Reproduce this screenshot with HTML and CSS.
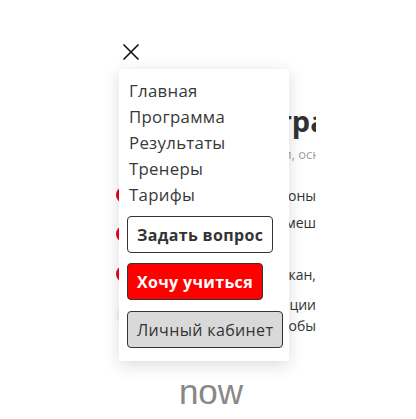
FILE: index.html
```html
<!DOCTYPE html>
<html lang="ru">
<head>
<meta charset="utf-8">
<title>Меню</title>
<link rel="stylesheet" href="styles.css">
</head>
<body>
<div class="page">
  <section class="content">
    <h2 class="title">Программа</h2>
    <p class="subtitle">питании, основы</p>
    <ul class="points">
      <li class="point"><span class="dot"></span><span class="lines"><span class="line">Пройдёшь все зоны</span></span></li>
      <li class="point"><span class="dot"></span><span class="lines"><span class="line">Научишься и смеш</span><span class="line short">и</span></span></li>
      <li class="point"><span class="dot"></span><span class="lines"><span class="line">Попадёшь на канал кан,</span></span></li>
      <li class="point"><span class="dot faint"></span><span class="lines"><span class="line">Получишь мотивации</span><span class="line">для того чтобы</span></span></li>
    </ul>
  </section>
  <div class="now">now</div>

  <button class="close" aria-label="Закрыть">
    <svg width="18" height="18" viewBox="0 0 18 18"><path d="M1.5 1.5 L16.5 16.5 M16.5 1.5 L1.5 16.5" stroke="#111" stroke-width="1.6" fill="none"/></svg>
  </button>

  <nav class="menu">
    <a class="menu-link" href="#">Главная</a>
    <a class="menu-link" href="#">Программа</a>
    <a class="menu-link" href="#">Результаты</a>
    <a class="menu-link" href="#">Тренеры</a>
    <a class="menu-link" href="#">Тарифы</a>
    <div class="menu-buttons">
      <button class="btn btn-outline">Задать вопрос</button>
      <button class="btn btn-red">Хочу учиться</button>
      <button class="btn btn-gray">Личный кабинет</button>
    </div>
  </nav>
</div>
</body>
</html>
```

FILE: styles.css
```css
* { box-sizing: border-box; }
html, body { margin: 0; padding: 0; background: #fff; }
body { font-family: "Open Sans", "Noto Sans", sans-serif; color: #333; }

.page {
  position: relative;
  width: 416px;
  height: 419px;
  overflow: hidden;
}

.content {
  margin-left: 110px;
  width: 206px;
  padding-top: 103px;
  overflow: hidden;
}
.title {
  margin: 0;
  padding-left: 110px;
  font-size: 29px;
  font-weight: 700;
  line-height: 36px;
  white-space: nowrap;
  color: #333;
}
.subtitle {
  margin: 6px 0 0;
  padding-left: 127px;
  font-size: 13px;
  line-height: 18px;
  color: #a0a0a0;
  white-space: nowrap;
}
.points {
  list-style: none;
  margin: 17px 0 0;
  padding: 0;
  display: flex;
  flex-direction: column;
}
.point {
  display: flex;
  align-items: center;
  gap: 8px;
}
.point:nth-child(1) { height: 30px; }
.point:nth-child(2) { height: 48px; }
.point:nth-child(3) { height: 32px; }
.point:nth-child(4) { height: 50px; }
.dot {
  flex: none;
  width: 16px;
  height: 16px;
  border-radius: 50%;
  background: #e8001c;
  margin-left: 6px;
}
.dot.faint { background: #fdf1f3; }
.lines {
  flex: 1;
  display: flex;
  flex-direction: column;
  font-size: 14px;
  line-height: 21px;
  min-width: 0;
}
.line { white-space: nowrap; text-align: right; }
.point:nth-child(2) .lines { align-self: flex-start; padding-top: 2px; }
.line.short { visibility: hidden; }

.now {
  position: absolute;
  left: 0;
  right: 0;
  top: 370px;
  text-align: center;
  font-family: "Liberation Sans", Arial, sans-serif;
  font-size: 35px;
  line-height: 44px;
  color: #888;
  padding-left: 6px;
}

.close {
  position: absolute;
  left: 122px;
  top: 43px;
  width: 18px;
  height: 18px;
  padding: 0;
  border: 0;
  background: none;
  display: block;
}
.close svg { display: block; }

.menu {
  position: absolute;
  left: 119px;
  top: 69px;
  width: 170px;
  height: 292px;
  background: #fff;
  box-shadow: 0 4px 16px rgba(0, 0, 0, 0.14);
  padding: 9px 8px 0;
  display: flex;
  flex-direction: column;
}
.menu-link {
  display: block;
  padding-left: 2px;
  font-size: 16.8px;
  line-height: 26px;
  color: #383838;
  text-decoration: none;
  letter-spacing: 0.3px;
}
.menu-buttons {
  display: flex;
  flex-direction: column;
  align-items: flex-start;
  margin-top: 8px;
}
.btn {
  font-family: "Open Sans", "Noto Sans", sans-serif;
  height: 37px;
  border-radius: 4px;
  font-size: 16px;
  padding: 0 9px;
  border: 1px solid #333;
  color: #333;
  background: #fff;
  white-space: nowrap;
  letter-spacing: 0.35px;
}
.btn-outline { font-weight: 700; }
.btn-red {
  margin-top: 10px;
  background: #ff0000;
  color: #fff;
  font-weight: 700;
  border-color: #333;
}
.btn-gray {
  margin-top: 11px;
  background: #d9d9d9;
  font-weight: 400;
}
```
